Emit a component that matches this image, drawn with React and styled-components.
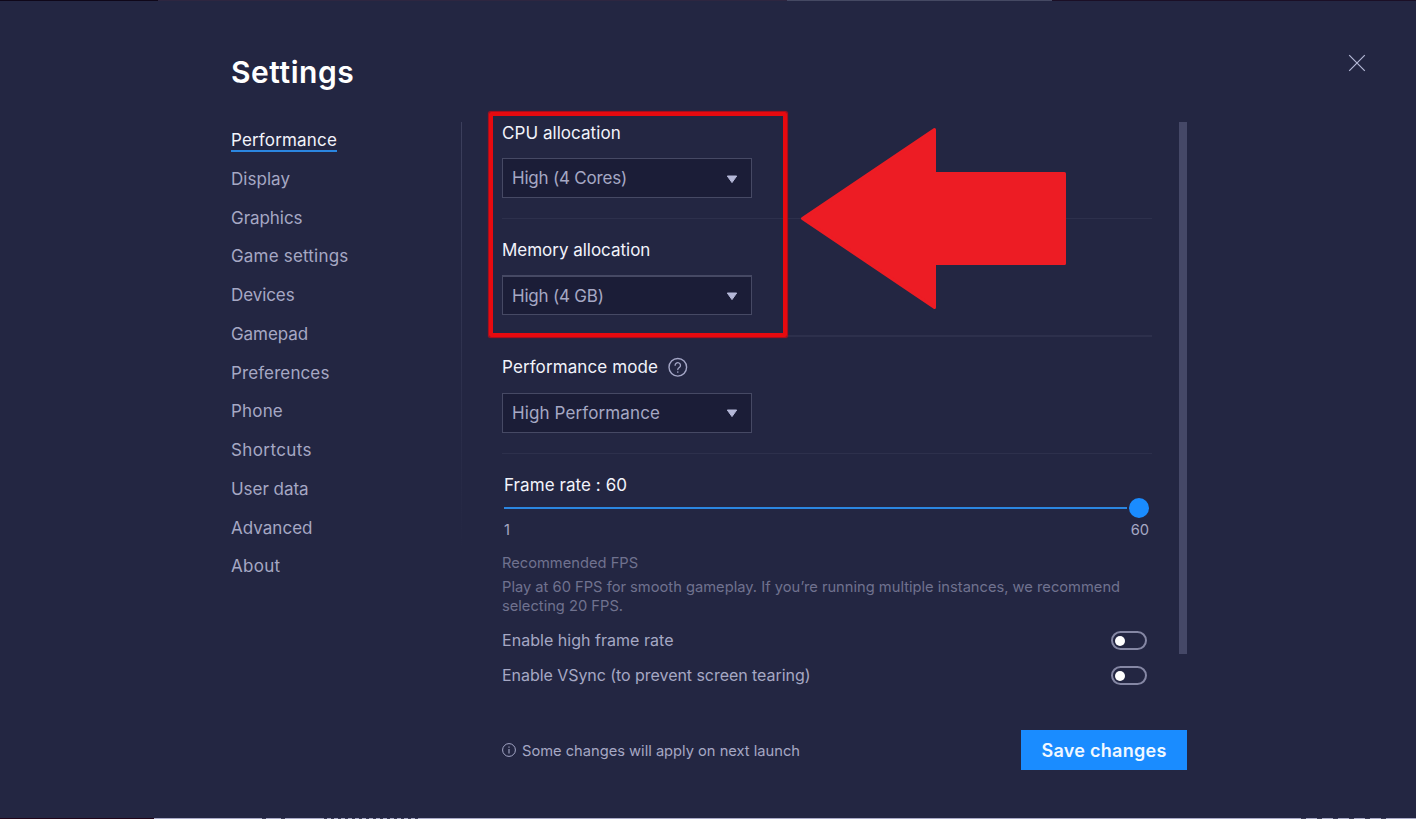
import React from 'react';
import styled, { createGlobalStyle, css } from 'styled-components';

const navItems = [
    { label: 'Performance', track: 0.17 },
    { label: 'Display', track: 0.04 },
    { label: 'Graphics', track: -0.05 },
    { label: 'Game settings', track: 0.19 },
    { label: 'Devices', track: -0.08 },
    { label: 'Gamepad', track: -0.08 },
    { label: 'Preferences', track: 0.11 },
    { label: 'Phone', track: 0.18 },
    { label: 'Shortcuts', track: 0.4 },
    { label: 'User data', track: -0.04 },
    { label: 'Advanced', track: 0.03 },
    { label: 'About', track: 0.3 },
];

const selects = [
    { label: 'CPU allocation', track: 0.05, value: 'High (4 Cores)', valueTrack: -0.2 },
    { label: 'Memory allocation', track: -0.02, value: 'High (4 GB)', valueTrack: -0.2, thick: true },
    { label: 'Performance mode', track: 0.11, value: 'High Performance', valueTrack: 0.12, help: true },
];

const toggles = [
    { label: 'Enable high frame rate', track: 0.03 },
    { label: 'Enable VSync (to prevent screen tearing)', track: -0.05 },
];

const CloseIcon = () => (
    <svg width="18" height="18" viewBox="0 0 18 18" fill="none" stroke="#b4b8d6" strokeWidth="1.2">
        <path d="M1.2 1.2l15.6 15.6M16.8 1.2L1.2 16.8" />
    </svg>
);

const HelpIcon = () => (
    <svg width="20" height="20" viewBox="0 0 20 20" fill="none" stroke="#a4a6c6" strokeLinecap="round">
        <circle cx="9.8" cy="10.3" r="8.8" strokeWidth="1.4" />
        <path d="M7.1 8.3a2.7 2.6 0 1 1 4.3 2.1c-.9.6-1.6 1-1.6 2.1" strokeWidth="1.3" />
        <path d="M9.8 15v.1" strokeWidth="1.6" />
    </svg>
);

const InfoIcon = () => (
    <svg width="14" height="14" viewBox="0 0 14 14" fill="none" stroke="#a4a6c6">
        <circle cx="7" cy="7" r="6.4" strokeWidth="1" />
        <path d="M7 6v4.6M7 3.5v1.2" strokeWidth="1.1" />
    </svg>
);

const CaretIcon = () => (
    <svg width="12" height="9" viewBox="0 0 12 9">
        <path d="M1.3 1h9.4L6 7.6z" fill="#b5b8d8" stroke="#b5b8d8" strokeWidth="1" strokeLinejoin="round" />
    </svg>
);

const App = () => {
    return (
        <>
            <GlobalStyle />
            <Window>
                <TopEdge />
                <Header>
                    <Title>Settings</Title>
                    <CloseButton type="button" aria-label="Close">
                        <CloseIcon />
                    </CloseButton>
                </Header>

                <Body>
                    <Sidebar>
                        {navItems.map((item, index) => (
                            <NavItem key={item.label} $active={index === 0} $track={item.track}>
                                {item.label}
                            </NavItem>
                        ))}
                    </Sidebar>
                    <Separator />

                    <Content>
                        {selects.map((item) => (
                            <Section key={item.label} $thick={item.thick}>
                                <LabelRow>
                                    <Label $track={item.track}>{item.label}</Label>
                                    {item.help && <HelpIcon />}
                                </LabelRow>
                                <Select type="button" $track={item.valueTrack} $thick={item.thick}>
                                    {item.value}
                                    <CaretIcon />
                                </Select>
                            </Section>
                        ))}

                        <FrameRate>
                            <FrameRateLabel $track={0.07}>Frame rate : 60</FrameRateLabel>
                            <Slider>
                                <SliderTrack />
                                <SliderKnob />
                            </Slider>
                            <SliderScale>
                                <span>1</span>
                                <span>60</span>
                            </SliderScale>
                        </FrameRate>

                        <HintTitle>Recommended FPS</HintTitle>
                        <HintText>
                            Play at 60 FPS for smooth gameplay. If you’re running multiple instances, we recommend
                            selecting 20 FPS.
                        </HintText>

                        {toggles.map((item) => (
                            <ToggleRow key={item.label} $track={item.track}>
                                {item.label}
                                <Toggle>
                                    <ToggleKnob />
                                </Toggle>
                            </ToggleRow>
                        ))}
                    </Content>
                    <Scrollbar />
                </Body>

                <Footer>
                    <Notice>
                        <InfoIcon />
                        <NoticeText>Some changes will apply on next launch</NoticeText>
                    </Notice>
                    <SaveButton type="button">Save changes</SaveButton>
                </Footer>
                <BottomEdge />

                <Highlight />
                <Arrow viewBox="0 0 270 186">
                    <path d="M4.5 92.5L136.5 3.5v44h130v90h-130V181.5z" />
                </Arrow>
            </Window>
        </>
    );
};

const GlobalStyle = createGlobalStyle`
    body {
        margin: 0;
        background: #232642;
    }

    *,
    *::before,
    *::after {
        box-sizing: border-box;
    }

    svg {
        display: block;
        flex: none;
    }
`;

const tracked = css`
    letter-spacing: ${({ $track }) => $track}px;
`;

const Window = styled.div`
    position: relative;
    display: flex;
    flex-direction: column;
    width: 1416px;
    height: 819px;
    overflow: hidden;
    background: #232642;
    color: #a6a8c4;
    font-family: Inter, Roboto, sans-serif;
    font-size: 17px;
    line-height: 20px;
`;

const TopEdge = styled.div`
    flex: none;
    height: 1px;
    background: linear-gradient(
        to right,
        #0f0719 158px,
        #2e2640 158px 787px,
        #454963 787px 1052px,
        #1b0f26 1052px
    );
`;

const BottomEdge = styled.div`
    flex: none;
    height: 1px;
    margin-top: auto;
    background:
        repeating-linear-gradient(to right, #3a3b58 0 3px, #a9aac8 3px 7px) 324px 0 / 94px 1px no-repeat,
        repeating-linear-gradient(to right, #3a3b58 0 4px, #a9aac8 4px 19px) 262px 0 / 23px 1px no-repeat,
        repeating-linear-gradient(to right, #3a3b58 0 5px, #a9aac8 5px 16px) 1301px 0 / 96px 1px no-repeat,
        linear-gradient(to right, #22061a 154px, #a9aac8 154px);
`;

const Header = styled.header`
    display: flex;
    justify-content: space-between;
    align-items: flex-start;
    height: 121px;
    padding: 51px 50px 0 231px;
`;

const Title = styled.h1`
    margin: 0;
    color: #fff;
    font-size: 30px;
    font-weight: 600;
    line-height: 40px;
    letter-spacing: 0.55px;
`;

const CloseButton = styled.button`
    margin-top: 2px;
    padding: 0;
    border: 0;
    background: none;
    cursor: pointer;
`;

const Body = styled.main`
    display: flex;
    align-items: flex-start;
    height: 568px;
    padding-left: 231px;
`;

const Sidebar = styled.nav`
    display: flex;
    flex-direction: column;
    align-items: flex-start;
    gap: 16.76px;
    width: 230px;
    padding-top: 8px;
`;

const NavItem = styled.a`
    height: 22px;
    border-bottom: 2px solid ${({ $active }) => ($active ? '#2b86e0' : 'transparent')};
    color: ${({ $active }) => ($active ? '#f2f3fb' : '#a6a8c4')};
    line-height: 21px;
    white-space: nowrap;
    cursor: pointer;
    ${tracked}
`;

const Separator = styled.div`
    width: 1px;
    height: 532px;
    background: linear-gradient(to bottom, #3c3f5c, #34375400 80%);
`;

const Content = styled.div`
    width: 650px;
    margin-left: 40px;
`;

const Section = styled.section`
    height: 117.4px;

    &::after {
        content: '';
        display: block;
        height: ${({ $thick }) => ($thick ? 2 : 1)}px;
        margin-top: 20px;
        background: #2d304c;
    }
`;

const LabelRow = styled.div`
    display: flex;
    align-items: center;
    gap: 9.5px;
    height: 20px;
    margin-bottom: 16px;
`;

const Label = styled.span`
    padding-top: 1.3px;
    color: #f2f3fb;
    line-height: 20px;
    white-space: nowrap;
    ${tracked}
`;

const FrameRateLabel = styled(Label)`
    display: block;
    height: 20px;
    padding-top: 1px;
    line-height: 21px;
`;

const Select = styled.button`
    display: flex;
    justify-content: space-between;
    align-items: center;
    width: 250px;
    height: 40px;
    padding: 0 13px 0 9px;
    border: 1px solid #464964;
    border-top-width: ${({ $thick }) => ($thick ? 2 : 1)}px;
    background: #1b1d37;
    color: #a6a8c4;
    font: inherit;
    cursor: pointer;
    ${tracked}

    svg {
        margin-top: 2px;
    }
`;

const FrameRate = styled.section`
    padding-left: 2px;
`;

const Slider = styled.div`
    display: flex;
    align-items: center;
    gap: 2.3px;
    height: 20px;
    margin-top: 3.8px;
`;

const SliderTrack = styled.div`
    width: 623px;
    height: 2px;
    background: #2b86e0;
`;

const SliderKnob = styled.div`
    width: 20px;
    height: 20px;
    border-radius: 50%;
    background: #1a8cff;
`;

const SliderScale = styled.div`
    display: flex;
    justify-content: space-between;
    width: 645px;
    margin-top: 2px;
    font-size: 14.7px;
`;

const HintTitle = styled.div`
    margin-top: 13px;
    color: #70728f;
    font-size: 14.7px;
`;

const HintText = styled.p`
    width: 630px;
    margin: 5px 0 14px;
    color: #70728f;
    font-size: 14.7px;
    line-height: 19px;
`;

const ToggleRow = styled.div`
    display: flex;
    justify-content: space-between;
    align-items: center;
    height: 20px;
    margin-bottom: 15px;
    padding-right: 5px;
    font-size: 16px;
    ${tracked}
`;

const Toggle = styled.div`
    display: flex;
    align-items: center;
    width: 36px;
    height: 19px;
    margin-top: 2px;
    padding-left: 1.8px;
    border: 2px solid #8587a4;
    border-radius: 9.5px;
`;

const ToggleKnob = styled.div`
    width: 10.5px;
    height: 10.5px;
    border-radius: 50%;
    background: #fff;
`;

const Scrollbar = styled.div`
    width: 8px;
    height: 532px;
    margin-left: 27px;
    background: #454867;
`;

const Footer = styled.footer`
    display: flex;
    justify-content: space-between;
    align-items: center;
    height: 40px;
    margin-top: 40px;
    padding: 0 229px 0 502px;
`;

const Notice = styled.div`
    display: flex;
    align-items: center;
    gap: 6px;
    font-size: 14.7px;
`;

const NoticeText = styled.span`
    padding-top: 2px;
    letter-spacing: -0.01px;
`;

const SaveButton = styled.button`
    width: 166px;
    height: 40px;
    padding: 0;
    border: 0;
    background: #1a8cff;
    color: #f1f8ff;
    font-family: inherit;
    font-size: 18px;
    font-weight: 600;
    letter-spacing: 0.28px;
    cursor: pointer;
`;

const Highlight = styled.div`
    position: absolute;
    top: 112px;
    left: 489px;
    width: 298px;
    height: 225px;
    border: 4px solid #e60a0f;
    border-radius: 2px;
    box-shadow: 0 0 1px 0.5px #b50d1a;
`;

const Arrow = styled.svg`
    position: absolute;
    top: 126px;
    left: 798px;
    width: 270px;
    height: 186px;
    fill: #ed1c24;
    stroke: #ed1c24;
    stroke-width: 3;
    stroke-linejoin: round;
`;

export default App;
